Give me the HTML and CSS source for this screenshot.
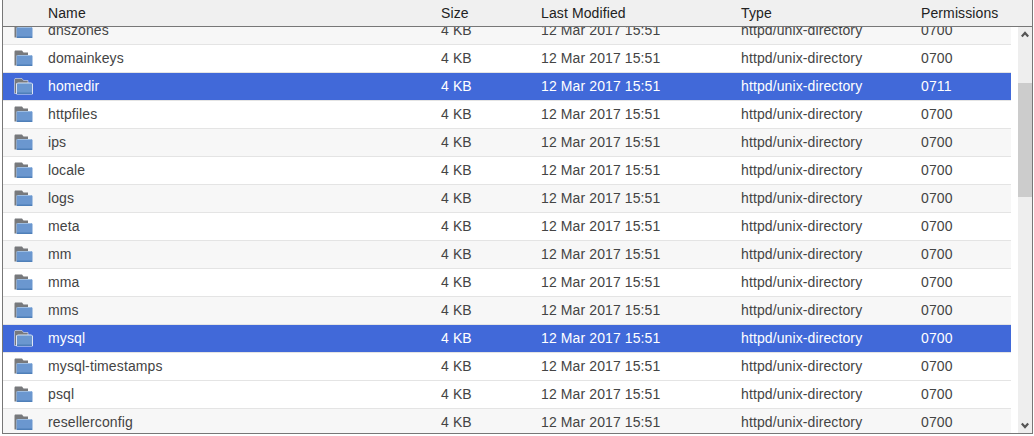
FILE: index.html
```html
<!DOCTYPE html>
<html lang="en">
<head>
<meta charset="utf-8">
<title>Files</title>
<link rel="stylesheet" href="styles.css">
</head>
<body>
<svg class="defs" width="0" height="0" aria-hidden="true">
  <symbol id="folder" viewBox="0 0 19 17">
    <path d="M0.5 1.5 L1 0.5 H8 L9.5 2.5 H14 V5.5 H2.5 V15.5 H0.5 Z" fill="#77797c" stroke="var(--edge, none)" stroke-width="0.6"/>
    <path d="M2.5 6 L3.5 5 H17.5 L18.5 6 V16 H2.5 Z" fill="#6b97cf" stroke="var(--edge, none)" stroke-width="1"/>
    <path d="M3 14.5 H18 V16 H3 Z" fill="#4f7fb8"/>
    <path d="M3.5 5.5 H17.5" stroke="#9dbde2" stroke-width="1"/>
  </symbol>
</svg>
<div class="browser">
  <div class="head row-grid">
    <span>Name</span><span>Size</span><span>Last Modified</span><span>Type</span><span>Permissions</span>
  </div>
  <div class="pane">
    <div class="list">
      <div class="rows" id="rows">
        <div class="row row-grid alt"><span class="name"><svg class="ico"><use href="#folder"/></svg>dnszones</span><span>4 KB</span><span>12 Mar 2017 15:51</span><span>httpd/unix-directory</span><span>0700</span></div>
        <div class="row row-grid"><span class="name"><svg class="ico"><use href="#folder"/></svg>domainkeys</span><span>4 KB</span><span>12 Mar 2017 15:51</span><span>httpd/unix-directory</span><span>0700</span></div>
        <div class="row row-grid sel"><span class="name"><svg class="ico"><use href="#folder"/></svg>homedir</span><span>4 KB</span><span>12 Mar 2017 15:51</span><span>httpd/unix-directory</span><span>0711</span></div>
        <div class="row row-grid"><span class="name"><svg class="ico"><use href="#folder"/></svg>httpfiles</span><span>4 KB</span><span>12 Mar 2017 15:51</span><span>httpd/unix-directory</span><span>0700</span></div>
        <div class="row row-grid alt"><span class="name"><svg class="ico"><use href="#folder"/></svg>ips</span><span>4 KB</span><span>12 Mar 2017 15:51</span><span>httpd/unix-directory</span><span>0700</span></div>
        <div class="row row-grid"><span class="name"><svg class="ico"><use href="#folder"/></svg>locale</span><span>4 KB</span><span>12 Mar 2017 15:51</span><span>httpd/unix-directory</span><span>0700</span></div>
        <div class="row row-grid alt"><span class="name"><svg class="ico"><use href="#folder"/></svg>logs</span><span>4 KB</span><span>12 Mar 2017 15:51</span><span>httpd/unix-directory</span><span>0700</span></div>
        <div class="row row-grid"><span class="name"><svg class="ico"><use href="#folder"/></svg>meta</span><span>4 KB</span><span>12 Mar 2017 15:51</span><span>httpd/unix-directory</span><span>0700</span></div>
        <div class="row row-grid alt"><span class="name"><svg class="ico"><use href="#folder"/></svg>mm</span><span>4 KB</span><span>12 Mar 2017 15:51</span><span>httpd/unix-directory</span><span>0700</span></div>
        <div class="row row-grid"><span class="name"><svg class="ico"><use href="#folder"/></svg>mma</span><span>4 KB</span><span>12 Mar 2017 15:51</span><span>httpd/unix-directory</span><span>0700</span></div>
        <div class="row row-grid alt"><span class="name"><svg class="ico"><use href="#folder"/></svg>mms</span><span>4 KB</span><span>12 Mar 2017 15:51</span><span>httpd/unix-directory</span><span>0700</span></div>
        <div class="row row-grid sel"><span class="name"><svg class="ico"><use href="#folder"/></svg>mysql</span><span>4 KB</span><span>12 Mar 2017 15:51</span><span>httpd/unix-directory</span><span>0700</span></div>
        <div class="row row-grid"><span class="name"><svg class="ico"><use href="#folder"/></svg>mysql-timestamps</span><span>4 KB</span><span>12 Mar 2017 15:51</span><span>httpd/unix-directory</span><span>0700</span></div>
        <div class="row row-grid"><span class="name"><svg class="ico"><use href="#folder"/></svg>psql</span><span>4 KB</span><span>12 Mar 2017 15:51</span><span>httpd/unix-directory</span><span>0700</span></div>
        <div class="row row-grid alt"><span class="name"><svg class="ico"><use href="#folder"/></svg>resellerconfig</span><span>4 KB</span><span>12 Mar 2017 15:51</span><span>httpd/unix-directory</span><span>0700</span></div>
      </div>
    </div>
    <div class="track">
      <svg class="arrow" width="8" height="7" viewBox="0 0 8 7"><path d="M0.8 5.5 L4 2 L7.2 5.5" fill="none" stroke="#555" stroke-width="2.2"/></svg>
      <div class="thumb"></div>
      <svg class="arrow down" width="8" height="7" viewBox="0 0 8 7"><path d="M0.8 1.5 L4 5 L7.2 1.5" fill="none" stroke="#555" stroke-width="2.2"/></svg>
    </div>
  </div>
</div>
</body>
</html>
```
FILE: styles.css
```css
* { box-sizing: border-box; }
html, body { margin: 0; padding: 0; background: #fff; }
body { padding: 0 1px 2px 2px; width: 1034px; height: 436px; font-family: "Liberation Sans", Arial, sans-serif; font-size: 14px; letter-spacing: 0.11px; color: #333; overflow: hidden; }
.defs { position: absolute; }
.browser { height: 434px; border-left: 1px solid #777; border-right: 1px solid #777; border-bottom: 1px solid #777; display: flex; flex-direction: column; }
.row-grid { display: grid; grid-template-columns: 438px 100px 200px 180px 1fr; }
.head { height: 27px; flex: none; background: #f0f0f0; border-bottom: 1px solid #777; align-items: center; color: #222; }
.head span:first-child { padding-left: 45px; }
.pane { flex: 1; min-height: 0; display: flex; }
.list { flex: 1; min-width: 0; overflow: hidden; padding-right: 7px; }
.rows { margin-top: -11px; }
.row { height: 28px; padding-bottom: 2px; align-items: center; border-top: 1px solid #e4e4e4; color: #444; background: #fff; }
.row.alt { background: #f7f7f7; }
.row.sel { background: #4169d9; color: #fff; --edge: #dfe6f5; }
.name { display: flex; align-items: center; padding-left: 11px; gap: 15px; }
.ico { width: 19px; height: 17px; flex: none; margin-top: 2px; }
.track { width: 14px; flex: none; background: #eee; display: flex; flex-direction: column; align-items: center; }
.arrow { flex: none; margin-top: 4px; }
.thumb { width: 100%; height: 114px; background: #ccc; margin-top: 45px; }
.arrow.down { margin-top: auto; margin-bottom: 4px; }
```
